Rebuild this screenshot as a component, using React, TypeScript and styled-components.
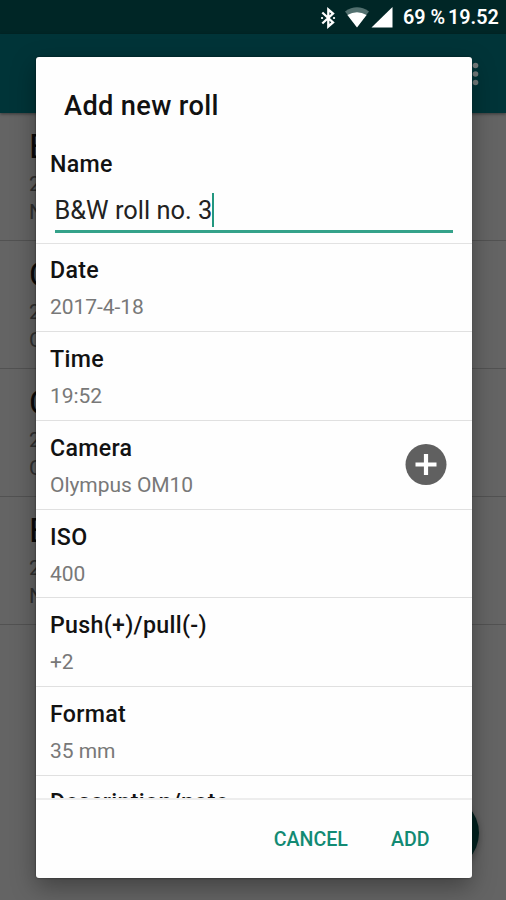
import React from "react";
import styled, { createGlobalStyle } from "styled-components";

const Global = createGlobalStyle`
  * { box-sizing: border-box; }
  body { margin: 0; background: #606060; font-family: Roboto, "Noto Sans", sans-serif; }
`;

const Screen = styled.div`
  position: relative;
  width: 506px;
  height: 900px;
  overflow: hidden;
  background: #646464;
`;

const StatusBar = styled.div`
  display: flex;
  align-items: center;
  justify-content: flex-end;
  height: 34px;
  padding: 2px 9px 0 0;
  background: #002626;
  color: #fff;
`;

const StatusText = styled.span<{ $width: number; $gap: number }>`
  width: ${(p) => p.$width}px;
  margin-left: ${(p) => p.$gap}px;
  font-size: 19.8px;
  font-weight: 600;
  line-height: 32px;
  white-space: nowrap;
`;

const AppBar = styled.div`
  display: flex;
  align-items: center;
  justify-content: flex-end;
  height: 79px;
  padding-right: 27px;
  background: #003438;
  box-shadow: 0 1px 3px rgba(0, 0, 0, 0.45);
`;

const RollItem = styled.div`
  height: 128px;
  padding: 11px 0 0 29px;
  border-bottom: 1px solid #525252;
`;

const RollName = styled.div`
  font-size: 34px;
  line-height: 44px;
  color: #0a0a0a;
`;

const RollMeta = styled.div`
  font-size: 21px;
  line-height: 28px;
  color: #303030;

  ${RollName} + & {
    margin-top: 2px;
  }
`;

const Fab = styled.div`
  position: absolute;
  left: 403px;
  top: 795px;
  width: 76px;
  height: 76px;
  border-radius: 50%;
  background: #00201e;
  box-shadow: 0 3px 6px rgba(0, 0, 0, 0.3);
`;

const Dialog = styled.div`
  position: absolute;
  left: 35.5px;
  top: 57px;
  width: 436px;
  height: 821px;
  display: flex;
  flex-direction: column;
  overflow: hidden;
  border-radius: 3px;
  background: #fefefe;
`;

const DialogShadow = styled.div`
  position: absolute;
  left: 36px;
  top: 57px;
  width: 435px;
  height: 821px;
  border-radius: 3px;
  box-shadow: 0 0 2px rgba(0, 0, 0, 0.6), 0 9px 24px rgba(0, 0, 0, 0.35);
`;

const Title = styled.h1`
  margin: 0;
  padding: 32px 0 0 28.5px;
  height: 89px;
  font-size: 27.2px;
  letter-spacing: 0.35px;
  line-height: 34px;
  font-weight: 500;
  color: #111;
`;

const Body = styled.div`
  flex: 1;
  min-height: 0;
  overflow: hidden;
`;

const NameField = styled.div`
  height: 97.6px;
  padding: 4px 0 0 14.5px;
  border-bottom: 1.6px solid #e2e2e2;
`;

const Label = styled.div`
  font-size: 23.2px;
  line-height: 28px;
  font-weight: 500;
  letter-spacing: 0.3px;
  color: #121212;
`;

const Input = styled.div`
  display: flex;
  align-items: center;
  width: 398px;
  height: 54.5px;
  padding-top: 13px;
  margin: 0 0 0 4.5px;
  border-bottom: 3px solid #35a28a;
  font-size: 25.4px;
  color: #222;
  white-space: nowrap;
`;

const Caret = styled.span`
  width: 2px;
  height: 34px;
  background: #22977f;
`;

const Row = styled.div`
  display: flex;
  align-items: center;
  justify-content: space-between;
  height: 88.7px;
  padding: 0 25px 0 14.5px;
  border-bottom: 1.6px solid #e0e0e0;
`;

const RowText = styled.div`
  padding-top: 3px;

  ${Row}:last-child > & {
    padding-top: 1px;
  }
`;

const Value = styled.div`
  margin-top: 9px;
  font-size: 21px;
  line-height: 28px;
  letter-spacing: -0.05px;
  color: #787878;
`;

const Footer = styled.div`
  display: flex;
  align-items: center;
  justify-content: flex-end;
  gap: 43px;
  height: 80px;
  padding: 2px 42px 0 0;
  border-top: 2px solid #ededed;
`;

const Action = styled.span`
  font-size: 19.6px;
  font-weight: 500;
  line-height: 26px;
  color: #128a73;
`;

const Bluetooth = () => (
  <svg width="16" height="22" viewBox="0 0 16 22" fill="none" stroke="#fff" strokeWidth="2.3">
    <path d="M2.3 5.5 L13 15.5 L8.3 19.5 V2.5 L13 6.5 L2.3 16.5" />
    <path d="M2 11h.1M14 11h.1" strokeWidth="2.2" strokeLinecap="round" />
  </svg>
);

const StatusIcons = styled.div<{ $gap?: number }>`
  display: flex;
  align-items: center;
  margin-left: ${(p) => p.$gap ?? 0}px;
`;

const Signals = () => (
  <svg width="50" height="22" viewBox="0 0 50 22">
    <path d="M0 4.5 Q12 -3.8 24 4.5 L12 20Z" fill="#52706f" />
    <path d="M2.4 7.9 Q12 2.4 21.6 7.9 L12 20.5Z" fill="#fff" />
    <path d="M47.5 0V20.5H26.5Z" fill="#fff" />
  </svg>
);

const Overflow = () => (
  <svg width="7" height="26" viewBox="0 0 7 26" fill="#737b7b">
    <circle cx="3.5" cy="4.5" r="2.8" />
    <circle cx="3.5" cy="13" r="2.8" />
    <circle cx="3.5" cy="21.5" r="2.8" />
  </svg>
);

const AddIcon = () => (
  <svg width="42" height="42" viewBox="0 0 42 42">
    <circle cx="21" cy="20.5" r="20.5" fill="#606060" />
    <path d="M21 10v21M10.5 20.5h21" stroke="#fff" strokeWidth="4.2" />
  </svg>
);

const rolls = [
  ["B", "2", "N"],
  ["C", "2", "C"],
  ["C", "2", "C"],
  ["B", "2", "N"],
];

const fields = [
  { label: "Date", value: "2017-4-18" },
  { label: "Time", value: "19:52" },
  { label: "Camera", value: "Olympus OM10", add: true },
  { label: "ISO", value: "400" },
  { label: "Push(+)/pull(-)", value: "+2" },
  { label: "Format", value: "35 mm" },
  { label: "Description/note", value: "" },
];

export default function App() {
  return (
    <Screen>
      <Global />
      <StatusBar>
        <StatusIcons>
          <Bluetooth />
        </StatusIcons>
        <StatusIcons $gap={9}>
          <Signals />
        </StatusIcons>
        <StatusText $width={42} $gap={8}>69 %</StatusText>
        <StatusText $width={49} $gap={3}>19.52</StatusText>
      </StatusBar>
      <AppBar>
        <Overflow />
      </AppBar>
      {rolls.map(([name, date, note], i) => (
        <RollItem key={i}>
          <RollName>{name}</RollName>
          <RollMeta>{date}</RollMeta>
          <RollMeta>{note}</RollMeta>
        </RollItem>
      ))}
      <Fab />
      <DialogShadow />
      <Dialog>
        <Title>Add new roll</Title>
        <Body>
          <NameField>
            <Label>Name</Label>
            <Input>
              B&amp;W roll no. 3<Caret />
            </Input>
          </NameField>
          {fields.map((f) => (
            <Row key={f.label}>
              <RowText>
                <Label>{f.label}</Label>
                <Value>{f.value || "\u00a0"}</Value>
              </RowText>
              {f.add && <AddIcon />}
            </Row>
          ))}
        </Body>
        <Footer>
          <Action>CANCEL</Action>
          <Action>ADD</Action>
        </Footer>
      </Dialog>
    </Screen>
  );
}
